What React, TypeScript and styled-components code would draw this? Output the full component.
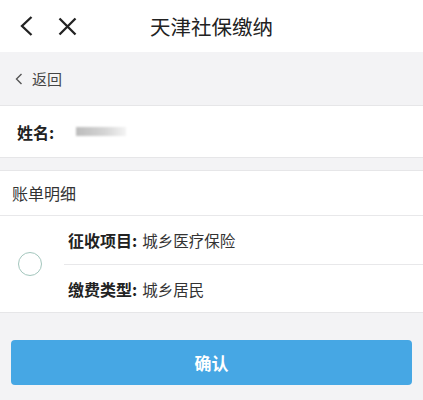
import styled, { createGlobalStyle } from 'styled-components';

const GlobalStyle = createGlobalStyle`
    body {
        margin: 0;
        background: #f3f3f5;
        font-family: "Noto Sans CJK SC", "Noto Sans", sans-serif;
    }
`;

const App = () => {
    return (
        <Page>
            <GlobalStyle />
            <TopBar>
                <IconButton>
                    <svg width="13" height="20" viewBox="0 0 13 20">
                        <path d="M11.5 1 L2 10 L11.5 19" fill="none" stroke="#222" strokeWidth="2.3" />
                    </svg>
                </IconButton>
                <IconButton>
                    <svg width="19" height="19" viewBox="0 0 19 19">
                        <path d="M1.5 1.5 L17.5 17.5 M17.5 1.5 L1.5 17.5" fill="none" stroke="#222" strokeWidth="2.3" />
                    </svg>
                </IconButton>
                <Title>天津社保缴纳</Title>
            </TopBar>

            <BackBar>
                <svg width="8" height="12" viewBox="0 0 8 12">
                    <path d="M6.5 1 L1.5 6 L6.5 11" fill="none" stroke="#555" strokeWidth="1.4" />
                </svg>
                <BackText>返回</BackText>
            </BackBar>

            <NameRow>
                <Label>姓名:</Label>
                <Blurred />
            </NameRow>

            <BillSection>
                <BillHeader>账单明细</BillHeader>
                <BillBody>
                    <RadioCol>
                        <Radio />
                    </RadioCol>
                    <Rows>
                        <Row>
                            <Label>征收项目:</Label>
                            <Value>城乡医疗保险</Value>
                        </Row>
                        <Row last>
                            <Label>缴费类型:</Label>
                            <Value>城乡居民</Value>
                        </Row>
                    </Rows>
                </BillBody>
            </BillSection>

            <Footer>
                <ConfirmButton>确认</ConfirmButton>
            </Footer>
        </Page>
    );
};

export default App;


const Page = styled.div`
    width: 423px;
    height: 400px;
    background: #f3f3f5;
    overflow: hidden;
`;

const TopBar = styled.div`
    position: relative;
    height: 52px;
    background: #fff;
    display: flex;
    align-items: center;
    padding-left: 20px;
    gap: 25px;
`;

const IconButton = styled.div`
    display: flex;
    align-items: center;
    justify-content: center;
    height: 24px;
`;

const Title = styled.div`
    position: absolute;
    left: 0;
    right: 0;
    top: 0;
    bottom: 0;
    display: flex;
    align-items: center;
    justify-content: center;
    font-size: 20.5px;
    color: #222;
    pointer-events: none;
`;

const BackBar = styled.div`
    height: 54px;
    display: flex;
    align-items: center;
    padding-left: 15px;
    gap: 9px;
    border-bottom: 1px solid #e6e6e8;
    box-sizing: border-box;
`;

const BackText = styled.span`
    font-size: 15px;
    color: #444;
`;

const NameRow = styled.div`
    height: 52px;
    background: #fff;
    display: flex;
    align-items: center;
    padding-left: 17px;
    gap: 22px;
    border-bottom: 1px solid #e6e6e8;
    box-sizing: border-box;
`;

const Label = styled.span`
    font-size: 16px;
    font-weight: bold;
    color: #222;
`;

const Blurred = styled.div`
    width: 50px;
    height: 9px;
    background: linear-gradient(90deg, #bcbcbc 0%, #cfcfcf 45%, #d6d6d6 60%, #f4f4f4 100%);
    filter: blur(1px);
`;

const BillSection = styled.div`
    margin-top: 12px;
    background: #fff;
    border-top: 1px solid #e6e6e8;
    border-bottom: 1px solid #e6e6e8;
`;

const BillHeader = styled.div`
    height: 44px;
    display: flex;
    align-items: center;
    padding-left: 12px;
    font-size: 16px;
    color: #333;
    border-bottom: 1px solid #e8e8ea;
`;

const BillBody = styled.div`
    display: flex;
`;

const RadioCol = styled.div`
    width: 64px;
    display: flex;
    align-items: center;
    justify-content: center;
    padding-right: 4px;
    box-sizing: border-box;
`;

const Radio = styled.div`
    width: 22px;
    height: 22px;
    border-radius: 50%;
    border: 1.5px solid #a3c6bd;
`;

const Rows = styled.div`
    flex: 1;
    display: flex;
    flex-direction: column;
`;

const Row = styled.div<{ last?: boolean }>`
    height: ${({ last }) => (last ? '47px' : '48px')};
    display: flex;
    align-items: center;
    padding-left: 4px;
    gap: 5px;
    border-bottom: ${({ last }) => (last ? 'none' : '1px solid #e8e8ea')};
`;

const Value = styled.span`
    font-size: 15.5px;
    color: #333;
`;

const Footer = styled.div`
    padding: 27px 11px 0;
`;

const ConfirmButton = styled.div`
    height: 45px;
    border-radius: 4px;
    background: #46a7e4;
    display: flex;
    align-items: center;
    justify-content: center;
    color: #fff;
    font-size: 17px;
    font-weight: bold;
`;
